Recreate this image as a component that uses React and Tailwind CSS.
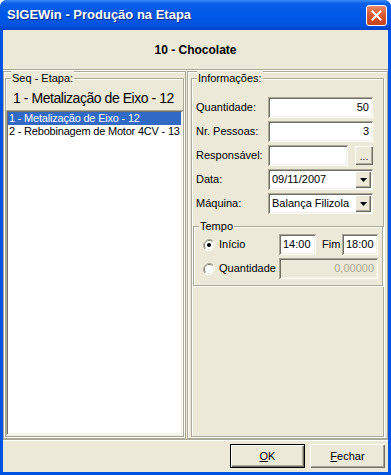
import React from "react";

const ui = { fontFamily: '"Liberation Sans", Arial, sans-serif' };

// classic sunken 3D edge (edit boxes, list)
const sunken =
  "shadow-[inset_1px_1px_0_#ACA899,inset_-1px_-1px_0_#FFFFFF,inset_2px_2px_0_#716F64,inset_-2px_-2px_0_#F1EFE2]";
// classic raised 3D edge (buttons)
const raised =
  "shadow-[inset_1px_1px_0_#FFFFFF,inset_-1px_-1px_0_#716F64,inset_-2px_-2px_0_#ACA899]";

const GroupBox = ({ label, className = "", children }) => (
  <div className={`relative border border-[#ACA899] shadow-[inset_1px_1px_0_#FFFFFF,1px_1px_0_#FFFFFF] ${className}`}>
    <span className="absolute -top-[8px] left-[5px] bg-[#ECE9D8] px-[1px] text-[11px] leading-[14px] whitespace-nowrap text-black">
      {label}
    </span>
    {children}
  </div>
);

const Edit = ({ value = "", align = "right", disabled, className = "" }) => (
  <div
    className={`h-[21px] shrink-0 ${sunken} ${disabled ? "bg-[#ECE9D8] text-[#ACA899]" : "bg-white text-black"} flex items-center px-[4px] text-[11px] ${align === "right" ? "justify-end" : "justify-start"} ${className}`}
  >
    {value}
  </div>
);

const DropArrow = () => (
  <div className={`w-[16px] h-[17px] bg-[#ECE9D8] ${raised} flex items-center justify-center`}>
    <svg width="7" height="4" viewBox="0 0 7 4">
      <path d="M0 0h7L3.5 4z" fill="#000" />
    </svg>
  </div>
);

const Combo = ({ value }) => (
  <div className={`h-[21px] w-[105px] shrink-0 bg-white ${sunken} flex items-center pl-[4px] pr-[2px] text-[11px]`}>
    <span className="flex-1 truncate">{value}</span>
    <DropArrow />
  </div>
);

const Radio = ({ checked }) => (
  <svg width="12" height="12" viewBox="0 0 12 12" className="shrink-0">
    <path d="M10.2 1.8A6 6 0 0 0 1.8 10.2" fill="none" stroke="#ACA899" />
    <path d="M9.5 2.5A5 5 0 0 0 2.5 9.5" fill="none" stroke="#716F64" />
    <path d="M1.8 10.2A6 6 0 0 0 10.2 1.8" fill="none" stroke="#FFFFFF" />
    <path d="M2.5 9.5A5 5 0 0 0 9.5 2.5" fill="none" stroke="#F1EFE2" />
    <circle cx="6" cy="6" r="4" fill="#FFFFFF" />
    {checked && <circle cx="6" cy="6" r="2" fill="#000" />}
  </svg>
);

const FieldRow = ({ label, children }) => (
  <div className="flex items-center h-[21px]">
    <span className="w-[72px] shrink-0 text-[11px] whitespace-nowrap">{label}</span>
    {children}
  </div>
);

const Button = ({ children, isDefault }) => (
  <button
    className={`w-[75px] h-[24px] bg-[#ECE9D8] text-[11px] text-black ${
      isDefault
        ? "border border-black shadow-[inset_1px_1px_0_#FFFFFF,inset_-1px_-1px_0_#716F64,inset_-2px_-2px_0_#ACA899]"
        : raised
    }`}
  >
    {children}
  </button>
);

export default function App() {
  return (
    <div
      style={ui}
      className="w-[391px] h-[475px] bg-[#0054E3] rounded-t-[7px] flex flex-col overflow-hidden"
    >
      {/* title bar */}
      <div className="h-[30px] shrink-0 flex items-center pl-[7px] pr-[4px] bg-[linear-gradient(180deg,#3C8CF7_0%,#0A5FEA_12%,#0058E6_50%,#0053E0_85%,#0040C8_100%)]">
        <span className="flex-1 text-white font-bold text-[13px] [text-shadow:1px_1px_0_#0A2A8A]">
          SIGEWin - Produção na Etapa
        </span>
        <div className="w-[21px] h-[21px] rounded-[3px] border border-white bg-[linear-gradient(180deg,#E8896A_0%,#D85A33_45%,#C4401A_100%)] flex items-center justify-center">
          <svg width="11" height="11" viewBox="0 0 11 11">
            <path d="M1.5 1.5l8 8M9.5 1.5l-8 8" stroke="#FFFFFF" strokeWidth="2" strokeLinecap="square" />
          </svg>
        </div>
      </div>

      {/* client area */}
      <div className="flex-1 mx-[3px] mb-[3px] bg-[#ECE9D8] flex flex-col text-black">
        <div className="h-[40px] shrink-0 flex items-center justify-center border-b border-[#ACA899] shadow-[0_1px_0_#FFFFFF]">
          <span className="font-bold text-[12px]">10 - Chocolate</span>
        </div>

        <div className="h-[368px] shrink-0 flex gap-[1px] mt-[1px]">
          {/* left panel */}
          <div className="w-[183px] shrink-0 border border-[#ACA899] shadow-[inset_1px_1px_0_#FFFFFF] px-[1px] pt-[6px] pb-[1px] flex">
            <GroupBox label="Seq - Etapa:" className="flex-1 min-w-0 flex flex-col pb-[1px]">
              <div className="h-[24px] flex items-center pl-[7px] text-[14px] tracking-[-0.45px] mt-[7px] whitespace-nowrap">
                1 - Metalização de Eixo - 12
              </div>
              <div className={`flex-1 bg-white ${sunken} p-[2px] text-[11px] leading-[13px] whitespace-nowrap tracking-[-0.2px] overflow-hidden`}>
                <div className="bg-[#316AC5] text-white pl-[1px]">1 - Metalização de Eixo - 12</div>
                <div className="pl-[1px]">2 - Rebobinagem de Motor 4CV - 13</div>
              </div>
            </GroupBox>
          </div>

          {/* right panel */}
          <div className="flex-1 min-w-0 border border-[#ACA899] shadow-[inset_1px_1px_0_#FFFFFF] px-[3px] pt-[6px] pb-[1px] flex">
            <GroupBox label="Informações:" className="flex-1 min-w-0 pl-[4px] pt-[18px]">
              <div className="flex flex-col gap-[3px]">
                <FieldRow label="Quantidade:">
                  <Edit value="50" className="w-[105px]" />
                </FieldRow>
                <FieldRow label="Nr. Pessoas:">
                  <Edit value="3" className="w-[105px]" />
                </FieldRow>
                <FieldRow label="Responsável:">
                  <Edit className="w-[80px]" />
                  <div className={`ml-[7px] w-[18px] h-[19px] shrink-0 bg-[#ECE9D8] ${raised} flex items-end justify-center pb-[3px] text-[10px] leading-none`}>
                    ...
                  </div>
                </FieldRow>
                <FieldRow label="Data:">
                  <Combo value="09/11/2007" />
                </FieldRow>
                <FieldRow label="Máquina:">
                  <Combo value="Balança Filizola" />
                </FieldRow>
              </div>

              <GroupBox label="Tempo" className="mt-[12px] -ml-[3px] w-[190px] h-[60px] pl-[9px] pt-[7px]">
                <div className="flex items-center h-[21px]">
                  <Radio checked />
                  <span className="ml-[4px] w-[60px] shrink-0 text-[11px]">Início</span>
                  <Edit value="14:00" align="left" className="w-[37px]" />
                  <span className="ml-[6px] w-[20px] shrink-0 text-[11px]">Fim</span>
                  <Edit value="18:00" align="left" className="w-[36px]" />
                </div>
                <div className="flex items-center h-[21px] mt-[3px]">
                  <Radio />
                  <span className="ml-[4px] w-[60px] shrink-0 text-[11px]">Quantidade</span>
                  <Edit value="0,00000" disabled className="w-[99px]" />
                </div>
              </GroupBox>
            </GroupBox>
          </div>
        </div>

        <div className="flex-1 flex items-center justify-end gap-[5px] pr-[3px] border-t border-[#ACA899] shadow-[inset_0_1px_0_#FFFFFF]">
          <Button isDefault>
            <span className="underline">O</span>K
          </Button>
          <Button>
            <span className="underline">F</span>echar
          </Button>
        </div>
      </div>
    </div>
  );
}
